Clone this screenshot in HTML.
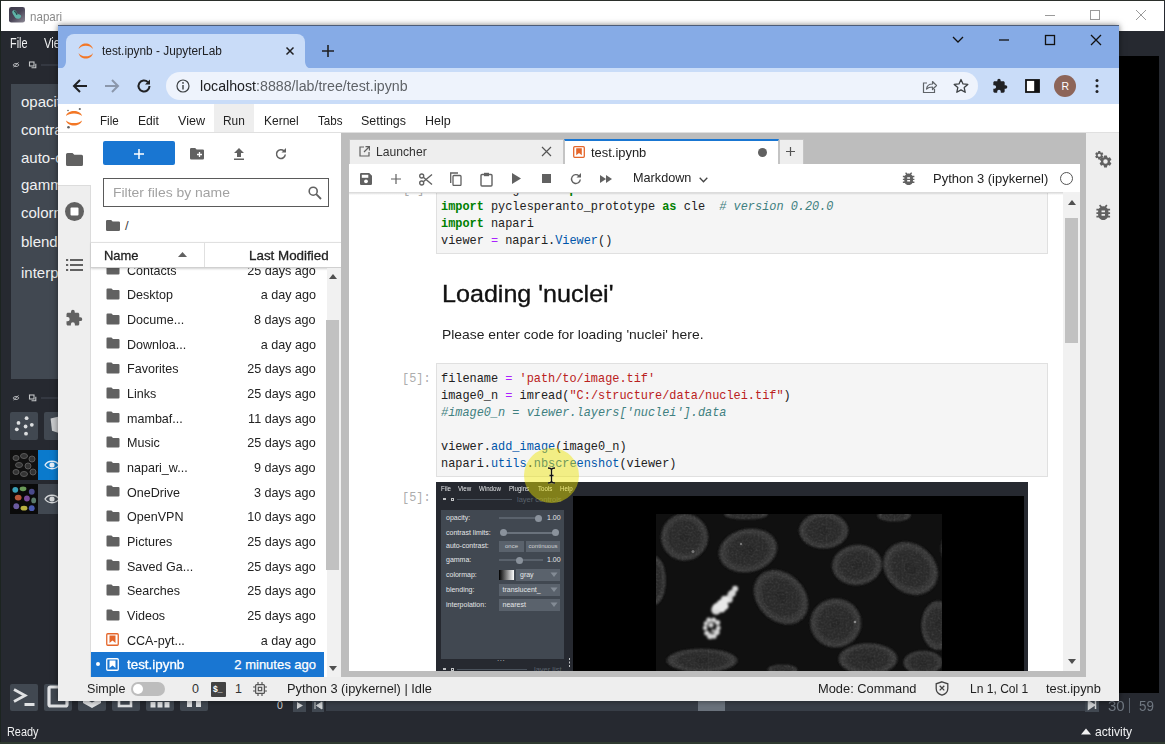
<!DOCTYPE html>
<html><head><meta charset="utf-8"><title>napari</title>
<style>
*{box-sizing:border-box;margin:0;padding:0}
html,body{width:1165px;height:744px;overflow:hidden;background:#262930}
body{font-family:"Liberation Sans",sans-serif;position:relative}
.abs{position:absolute}
#root{position:absolute;left:0;top:0;width:1165px;height:744px;overflow:hidden;background:#262930}
.t{position:absolute;white-space:nowrap;line-height:1}
/* napari */
#ntitle{left:1px;top:1px;width:1163px;height:30px;background:#fff}
.nlab{color:#f0f1f2;font-size:15px}
/* chrome */
#chrome{left:58px;top:25px;width:1061px;height:676px;background:#fff;overflow:hidden;box-shadow:0 0 6px rgba(0,0,0,.5)}
#tabstrip{left:0;top:0;width:1062px;height:44px;background:#86abe6}
#tab{left:8px;top:9px;width:239px;height:35px;background:#c9dcf8;border-radius:8px 8px 0 0}
#tbar{left:0;top:43px;width:1062px;height:36px;background:#c9dcf8}
#url{left:108px;top:47px;width:812px;height:28px;border-radius:14px;background:#eef3fc}
/* jupyter */
#jl{left:0;top:79px;width:1062px;height:597px;background:#fff;color:#222}
.menu{font-size:13.3px;color:#222;top:9.5px}
.row{left:33px;width:233px;height:25px;font-size:13px;color:#222}
.row .n{position:absolute;left:36px;top:5.5px;white-space:nowrap;transform-origin:0 50%;transform:scaleX(.965)}
.row .d{position:absolute;right:8px;top:5.5px;white-space:nowrap;transform-origin:100% 50%;transform:scaleX(.97)}
.row svg{position:absolute;left:15px;top:6.3px}
.code{font-family:"Liberation Mono",monospace;font-size:11.9px;white-space:pre;line-height:17px;color:#212121}
.k{color:#008000;font-weight:bold}.s{color:#ba2121}.c{color:#408080;font-style:italic}.o{color:#aa22ff}.p{color:#0055aa}
</style></head><body><div id="root">
<!-- NAPARI BACKGROUND WINDOW -->
<div class="abs" id="ntitle"></div>
<div class="t" style="left:30.4px;top:9.5px;font-size:13px;color:#8a8a8a;transform-origin:0 50%;transform:scaleX(0.891)">napari</div>

<!-- napari icon -->
<svg class="abs" style="left:9px;top:7.300px" width="16" height="15.500" viewBox="0 0 17 17" preserveAspectRatio="none"><defs><linearGradient id="nig" x1="0" y1="0" x2="1" y2="1"><stop offset="0" stop-color="#3d3a4a"/><stop offset=".5" stop-color="#4a4658"/><stop offset="1" stop-color="#8e8a96"/></linearGradient></defs><rect width="17" height="17" rx="2.500" fill="url(#nig)"/><path d="M4 4c2-1.500 4 .5 4.500 2.500.4 1.500 2.500 1 4 2.500 1.200 1.500-.5 4-3 4-2.500 0-3.500-2-4.500-4C4.500 8 2.500 5.500 4 4z" fill="#5fb3a8"/><path d="M5.500 4.500c1.500.5 2.500 2 3 4" stroke="#2a4a4a" stroke-width="1.500" fill="none"/></svg>
<!-- napari window buttons -->
<svg class="abs" style="left:1030px;top:1px" width="134" height="30" viewBox="0 0 134 30"><g stroke="#9a9a9a" stroke-width="1" fill="none"><path d="M15 14.500h10"/><rect x="60.500" y="9.500" width="9" height="9"/><path d="M106 9l10 10M116 9l-10 10"/></g></svg>
<!-- napari menu -->
<div class="t" style="left:10.3px;top:36.0px;font-size:14.500px;color:#f0f1f2;transform-origin:0 50%;transform:scaleX(0.749)">File</div>
<div class="t" style="left:44.3px;top:36px;font-size:14.500px;color:#f0f1f2;transform-origin:0 50%;transform:scaleX(.78)">View</div>
<!-- dock title 1 -->
<svg class="abs" style="left:8px;top:58px" width="50" height="14" viewBox="0 0 50 14"><path d="M5 7c1.200-2 4.800-2 6 0-1.200 2-4.800 2-6 0zM5.500 9l5-4.500" stroke="#b8babd" stroke-width="1" fill="none"/><rect x="21.500" y="4" width="4.500" height="4" fill="none" stroke="#c4c6c8" stroke-width="1.100"/><path d="M23.500 9.800h4.300v-4" stroke="#c4c6c8" stroke-width="1.100" fill="none"/><path d="M33 7h17" stroke="#424952" stroke-width="1"/></svg>
<div class="abs" style="left:11px;top:84px;width:60px;height:295px;background:#414851"></div>
<div class="t nlab" style="left:21px;top:94.3px">opacity:</div>
<div class="t nlab" style="left:21px;top:122.3px">contrast limits:</div>
<div class="t nlab" style="left:21px;top:150.3px">auto-contrast:</div>
<div class="t nlab" style="left:21px;top:177.3px">gamma:</div>
<div class="t nlab" style="left:21px;top:205.3px">colormap:</div>
<div class="t nlab" style="left:21px;top:234.3px">blending:</div>
<div class="t nlab" style="left:21px;top:265.3px">interpolation:</div>
<!-- dock title 2 -->
<svg class="abs" style="left:8px;top:391px" width="50" height="14" viewBox="0 0 50 14"><path d="M5 7c1.200-2 4.800-2 6 0-1.200 2-4.800 2-6 0zM5.500 9l5-4.500" stroke="#b8babd" stroke-width="1" fill="none"/><rect x="21.500" y="4" width="4.500" height="4" fill="none" stroke="#c4c6c8" stroke-width="1.100"/><path d="M23.500 9.800h4.300v-4" stroke="#c4c6c8" stroke-width="1.100" fill="none"/><path d="M33 7h17" stroke="#424952" stroke-width="1"/></svg>
<!-- layer buttons -->
<div class="abs" style="left:10px;top:412px;width:28px;height:28px;background:#414851;border-radius:2px"></div>
<svg class="abs" style="left:10px;top:412px" width="28" height="28" viewBox="0 0 28 28"><g fill="#dcdee0"><circle cx="16.600" cy="6.200" r="1.900"/><circle cx="8.500" cy="10.900" r="1.900"/><circle cx="21.800" cy="12.800" r="1.900"/><circle cx="15.600" cy="14.500" r="1.900"/><circle cx="6.800" cy="17.300" r="1.900"/><circle cx="16" cy="21.700" r="1.900"/></g></svg>
<div class="abs" style="left:44px;top:412px;width:28px;height:28px;background:#414851;border-radius:2px"></div>
<svg class="abs" style="left:44px;top:412px" width="28" height="28" viewBox="0 0 28 28"><path d="M6.600 6.600L14 4.700V20.700L8 18.800z" fill="#c8cacc"/></svg>
<!-- layer 1 -->
<div class="abs" style="left:10px;top:450px;width:28px;height:30px;background:#111"></div>
<svg class="abs" style="left:10px;top:450px" width="28" height="30" viewBox="0 0 28 30"><g fill="#333" stroke="#5a5a5a" stroke-width="1"><ellipse cx="6" cy="8" rx="3" ry="2.500"/><ellipse cx="14" cy="6" rx="3.500" ry="2.500"/><ellipse cx="22" cy="9" rx="3" ry="3"/><ellipse cx="9" cy="15" rx="3.500" ry="2.500"/><ellipse cx="18" cy="16" rx="3" ry="3"/><ellipse cx="6" cy="22" rx="3" ry="2.500"/><ellipse cx="14" cy="24" rx="3.500" ry="2.500"/><ellipse cx="23" cy="22" rx="3" ry="3"/></g></svg>
<div class="abs" style="left:38px;top:450px;width:40px;height:30px;background:#0a7acc"></div>
<svg class="abs" style="left:44px;top:458px" width="16" height="14" viewBox="0 0 16 14"><path d="M1 7c3-5 11-5 14 0-3 5-11 5-14 0z" fill="none" stroke="#e6eef7" stroke-width="1.300"/><circle cx="8" cy="7" r="2.600" fill="#e6eef7"/></svg>
<!-- layer 2 -->
<div class="abs" style="left:10px;top:484px;width:28px;height:30px;background:#0a0a0a"></div>
<svg class="abs" style="left:10px;top:484px" width="28" height="30" viewBox="0 0 28 31"><ellipse cx="5" cy="6" rx="3" ry="3" fill="#3a9fb8"/><ellipse cx="13" cy="5" rx="3.500" ry="2.500" fill="#6a9a58"/><ellipse cx="22" cy="8" rx="3" ry="3" fill="#4a4a8a"/><ellipse cx="8" cy="14" rx="3.500" ry="3" fill="#b8583a"/><ellipse cx="17" cy="15" rx="3" ry="3" fill="#7a4a9a"/><ellipse cx="24" cy="17" rx="2.500" ry="3" fill="#5a7a6a"/><ellipse cx="6" cy="23" rx="3" ry="3" fill="#6a5aa0"/><ellipse cx="14" cy="25" rx="3.500" ry="2.500" fill="#b8b040"/><ellipse cx="22" cy="25" rx="3" ry="3" fill="#4a5ab0"/></svg>
<div class="abs" style="left:38px;top:484px;width:40px;height:30px;background:#414851"></div>
<svg class="abs" style="left:44px;top:492px" width="16" height="14" viewBox="0 0 16 14"><path d="M1 7c3-5 11-5 14 0-3 5-11 5-14 0z" fill="none" stroke="#d6d8da" stroke-width="1.300"/><circle cx="8" cy="7" r="2.600" fill="#d6d8da"/></svg>
<!-- viewer buttons bottom -->
<div class="abs" style="left:10px;top:684px;width:28px;height:27px;background:#414851;border-radius:2px"></div>
<svg class="abs" style="left:10px;top:684px" width="28" height="27" viewBox="0 0 28 27"><path d="M4 5.500l11 6-11 6M14.500 20.500h10" stroke="#e0e2e4" stroke-width="2.800" fill="none"/></svg>
<div class="abs" style="left:44px;top:684px;width:28px;height:27px;background:#414851;border-radius:2px"></div>
<svg class="abs" style="left:44px;top:684px" width="28" height="27" viewBox="0 0 28 27"><rect x="5" y="3" width="18" height="19" rx="1.500" fill="none" stroke="#e0e2e4" stroke-width="3.200"/></svg>
<div class="abs" style="left:78px;top:684px;width:28px;height:27px;background:#414851;border-radius:2px"></div>
<svg class="abs" style="left:78px;top:684px" width="28" height="27" viewBox="0 0 28 27"><path d="M5 14l9 4.500 9-4.500v5l-9 5-9-5z" fill="#e0e2e4"/></svg>
<div class="abs" style="left:112px;top:684px;width:28px;height:27px;background:#414851;border-radius:2px"></div>
<svg class="abs" style="left:112px;top:684px" width="28" height="27" viewBox="0 0 28 27"><rect x="7" y="8" width="12" height="14" fill="none" stroke="#e0e2e4" stroke-width="2.600"/></svg>
<div class="abs" style="left:146px;top:684px;width:28px;height:27px;background:#414851;border-radius:2px"></div>
<svg class="abs" style="left:146px;top:684px" width="28" height="27" viewBox="0 0 28 27"><g fill="#e0e2e4"><rect x="4.500" y="18" width="5" height="5.500"/><rect x="11.500" y="18" width="5" height="5.500"/><rect x="18.500" y="18" width="5" height="5.500"/></g></svg>
<div class="abs" style="left:180px;top:684px;width:28px;height:27px;background:#414851;border-radius:2px"></div>
<svg class="abs" style="left:180px;top:684px" width="28" height="27" viewBox="0 0 28 27"><g fill="#e0e2e4"><rect x="7" y="12" width="5" height="11"/><rect x="16" y="12" width="5" height="11"/></g></svg>
<!-- dims row -->
<div class="t" style="left:277px;top:700px;font-size:10.500px;color:#d0d2d4">0</div>
<svg class="abs" style="left:292px;top:698.500px" width="34" height="13" viewBox="0 0 34 13"><rect x="1" y="0" width="13" height="13" fill="#414851"/><path d="M5 3l6 3.500-6 3.500z" fill="#d0d2d4"/><rect x="20" y="0" width="12" height="13" fill="#414851"/><path d="M30 3l-5.500 3.500 5.500 3.500zM23 3v7" fill="#d0d2d4" stroke="#d0d2d4"/></svg>
<div class="abs" style="left:326px;top:700px;width:770px;height:11px;background:#383e47"></div>
<div class="abs" style="left:698px;top:700px;width:27px;height:11px;background:#6a727c"></div>
<svg class="abs" style="left:1085px;top:698px" width="14" height="14" viewBox="0 0 14 14"><rect width="14" height="14" fill="#414851"/><path d="M3.500 3l6 4-6 4zM10.500 3v8" fill="#d0d2d4" stroke="#d0d2d4" stroke-width="1.500"/></svg>
<div class="t" style="left:1108.3px;top:698px;font-size:15.500px;color:#6f7780;transform-origin:0 50%;transform:scaleX(0.968)">30</div>
<div class="abs" style="left:1129px;top:698px;width:1px;height:15px;background:#5a626c"></div>
<div class="t" style="left:1138.6px;top:698px;font-size:15.500px;color:#6f7780;transform-origin:0 50%;transform:scaleX(0.864)">59</div>
<!-- canvas right -->
<div class="abs" style="left:1119px;top:56px;width:39.500px;height:637px;background:#000"></div>
<!-- status -->
<div class="t" style="left:7.2px;top:726px;font-size:12.500px;color:#f0f1f2;transform-origin:0 50%;transform:scaleX(0.869)">Ready</div>
<svg class="abs" style="left:1081px;top:728px" width="10" height="7" viewBox="0 0 10 7"><path d="M0 6.500L5 .5l5 6z" fill="#f0f1f2"/></svg>
<div class="t" style="left:1094.6px;top:725px;font-size:13px;color:#f0f1f2;transform-origin:0 50%;transform:scaleX(0.934)">activity</div>
<!-- edges -->
<div class="abs" style="left:0;top:0;width:1165px;height:1px;background:#2b2f2b"></div>
<div class="abs" style="left:0;top:0;width:1px;height:744px;background:#1c2420"></div>
<div class="abs" style="left:0;top:742px;width:1165px;height:2px;background:#2f3a30"></div>

<!-- CHROME WINDOW -->
<div class="abs" id="chrome">
<div class="abs" id="tabstrip"></div>
<div class="abs" id="tab"></div>
<div class="abs" id="tbar"></div>
<svg class="abs" style="left:0;top:36px" width="8" height="8" viewBox="0 0 8 8"><path d="M0 8h8V0C8 5 5 8 0 8z" fill="#c9dcf8"/></svg>
<svg class="abs" style="left:247px;top:36px" width="8" height="8" viewBox="0 0 8 8"><path d="M8 8H0V0c0 5 3 8 8 8z" fill="#c9dcf8"/></svg>
<div class="abs" style="left:0;top:0;width:1062px;height:1px;background:#4c5c78"></div>
<div class="abs" id="url"></div>

<!-- tab curve hints -->
<!-- jupyter favicon -->
<svg class="abs" style="left:20.400px;top:17px" width="15.600" height="18" viewBox="0 0 14 14" preserveAspectRatio="none"><path d="M.5 5.500C2 -.3 12 -.3 13.500 5.500 11 2 3 2 .5 5.500z" fill="#f37726"/><path d="M.5 8.500C2 14.300 12 14.300 13.500 8.500 11 12 3 12 .5 8.500z" fill="#f37726"/></svg>
<div class="t" style="left:44.2px;top:20.3px;font-size:12.300px;color:#202124;transform-origin:0 50%;transform:scaleX(0.963)">test.ipynb - JupyterLab</div>
<svg class="abs" style="left:226.200px;top:20px" width="12" height="12" viewBox="0 0 12 12"><path d="M2.500 2.500l7 7M9.500 2.500l-7 7" stroke="#202124" stroke-width="1.500"/></svg>
<svg class="abs" style="left:263px;top:19px" width="14" height="14" viewBox="0 0 14 14"><path d="M7 1v12M1 7h12" stroke="#202124" stroke-width="1.600"/></svg>
<!-- window controls -->
<svg class="abs" style="left:890px;top:4px" width="160" height="22" viewBox="0 0 160 22"><g stroke="#111" stroke-width="1.300" fill="none"><path d="M5 8l5 5 5-5"/><path d="M51 11h10"/><rect x="97.500" y="6.500" width="9" height="9"/><path d="M143 6l10 10M153 6l-10 10"/></g></svg>
<!-- nav -->
<svg class="abs" style="left:14px;top:53px" width="16" height="16" viewBox="0 0 16 16"><path d="M15 8H2.500M8 2L2 8l6 6" stroke="#202124" stroke-width="2" fill="none"/></svg>
<svg class="abs" style="left:46px;top:53px" width="16" height="16" viewBox="0 0 16 16"><path d="M1 8h12.500M8 2l6 6-6 6" stroke="#8b97ab" stroke-width="2" fill="none"/></svg>
<svg class="abs" style="left:78px;top:53px" width="16" height="16" viewBox="0 0 16 16"><path d="M13.500 8a5.500 5.500 0 1 1-1.600-3.900" stroke="#202124" stroke-width="2" fill="none"/><path d="M14 1.500v5h-5z" fill="#202124"/></svg>
<!-- info icon -->
<svg class="abs" style="left:118px;top:54px" width="14" height="14" viewBox="0 0 14 14"><circle cx="7" cy="7" r="6" fill="none" stroke="#3c4043" stroke-width="1.200"/><path d="M7 6v4.500" stroke="#3c4043" stroke-width="1.400"/><circle cx="7" cy="3.900" r=".9" fill="#3c4043"/></svg>
<div class="t" style="left:142.4px;top:54.500px;font-size:13.800px;color:#202124;transform-origin:0 50%;transform:scaleX(1.029)">localhost<span style="color:#5f6368">:8888/lab/tree/test.ipynb</span></div>
<!-- share -->
<svg class="abs" style="left:863px;top:53px" width="17" height="16" viewBox="0 0 17 16"><path d="M6 5H2.500v9.500h11V11" stroke="#5f6368" stroke-width="1.200" fill="none"/><path d="M5.500 11c.5-3.500 3-5 6-5V3.500L15.500 7.500 11.500 11.500V9c-2.500 0-4.500.5-6 2z" stroke="#5f6368" stroke-width="1.200" fill="none" stroke-linejoin="round"/></svg>
<!-- star -->
<svg class="abs" style="left:895px;top:53px" width="16" height="16" viewBox="0 0 16 16"><path d="M8 1.500l2 4.400 4.800.5-3.600 3.200 1 4.700L8 11.900l-4.200 2.400 1-4.700L1.200 6.400 6 5.900z" stroke="#3c4043" stroke-width="1.300" fill="none" stroke-linejoin="round"/></svg>
<!-- puzzle -->
<svg class="abs" style="left:934px;top:53px" width="16" height="16" viewBox="0 0 24 24"><path fill="#202124" d="M20.500 11H19V7c0-1.100-.9-2-2-2h-4V3.500a2.500 2.500 0 0 0-5 0V5H4c-1.100 0-2 .9-2 2v3.800h1.500a2.700 2.700 0 0 1 0 5.400H2V20c0 1.100.9 2 2 2h3.800v-1.500a2.700 2.700 0 0 1 5.400 0V22H17c1.100 0 2-.9 2-2v-4h1.500a2.500 2.500 0 0 0 0-5z"/></svg>
<!-- side panel -->
<svg class="abs" style="left:967px;top:54px" width="15" height="14" viewBox="0 0 15 14"><rect x="1" y="1" width="13" height="12" fill="#fff" stroke="#111" stroke-width="1.800"/><rect x="9.200" y="1" width="4.800" height="12" fill="#111"/></svg>
<!-- avatar -->
<div class="abs" style="left:996px;top:50px;width:22px;height:22px;border-radius:11px;background:#8d6559"></div>
<div class="t" style="left:1003.500px;top:56px;font-size:10.500px;color:#fff">R</div>
<!-- dots -->
<svg class="abs" style="left:1036px;top:53px" width="6" height="16" viewBox="0 0 6 16"><circle cx="3" cy="2.500" r="1.500" fill="#202124"/><circle cx="3" cy="8" r="1.500" fill="#202124"/><circle cx="3" cy="13.500" r="1.500" fill="#202124"/></svg>

<div class="abs" id="jl">

<!-- menu bar -->
<div class="abs" style="left:0;top:28px;width:1062px;height:1px;background:#e0e0e0"></div>
<svg class="abs" style="left:7px;top:3px" width="18" height="22" viewBox="0 0 18 22"><path d="M1 9C2.500 2.300 15.500 2.300 17 9 14 5.600 4 5.600 1 9z" fill="#f37726"/><path d="M1 13.500C2.500 20.200 15.500 20.200 17 13.500 14 16.900 4 16.900 1 13.500z" fill="#f37726"/><circle cx="14.800" cy="2" r="1.100" fill="#616161"/><circle cx="3" cy="3.500" r=".8" fill="#616161"/><circle cx="3.500" cy="20.300" r="1.300" fill="#616161"/></svg>
<div class="abs" style="left:156px;top:0;width:40px;height:28px;background:#eeeeee"></div>
<div class="t menu" style="left:42.4px;transform-origin:0 50%;transform:scaleX(0.877)">File</div>
<div class="t menu" style="left:80.3px;transform-origin:0 50%;transform:scaleX(0.912)">Edit</div>
<div class="t menu" style="left:119.7px;transform-origin:0 50%;transform:scaleX(0.944)">View</div>
<div class="t menu" style="left:165.2px;transform-origin:0 50%;transform:scaleX(0.893)">Run</div>
<div class="t menu" style="left:205.9px;transform-origin:0 50%;transform:scaleX(0.903)">Kernel</div>
<div class="t menu" style="left:259.7px;transform-origin:0 50%;transform:scaleX(0.872)">Tabs</div>
<div class="t menu" style="left:303.0px;transform-origin:0 50%;transform:scaleX(0.937)">Settings</div>
<div class="t menu" style="left:367.3px;transform-origin:0 50%;transform:scaleX(0.939)">Help</div>
<!-- left sidebar -->
<div class="abs" style="left:0;top:29px;width:33px;height:544px;background:#eeeeee;border-right:1px solid #dcdcdc"></div>
<div class="abs" style="left:0;top:29px;width:33px;height:52px;background:#fff"></div>
<div class="abs" style="left:0;top:81px;width:33px;height:1px;background:#dcdcdc"></div>
<svg class="abs" style="left:8px;top:48.500px" width="17" height="13" viewBox="0 0 17 13"><path d="M1.500 0h5l1.800 1.800h7.200A1.500 1.500 0 0 1 17 3.300v8.200A1.500 1.500 0 0 1 15.500 13h-14A1.500 1.500 0 0 1 0 11.500v-10A1.500 1.500 0 0 1 1.500 0z" fill="#616161"/></svg>
<svg class="abs" style="left:6.500px;top:98px" width="19" height="19" viewBox="0 0 19 19"><circle cx="9.500" cy="9.500" r="9.500" fill="#616161"/><rect x="5.500" y="5.500" width="8" height="8" rx="1" fill="#fff"/></svg>
<svg class="abs" style="left:8px;top:154px" width="17" height="14" viewBox="0 0 17 14"><g fill="#616161"><rect x="0" y="1" width="2.200" height="2"/><rect x="4" y="1" width="13" height="2"/><rect x="0" y="6" width="2.200" height="2"/><rect x="4" y="6" width="13" height="2"/><rect x="0" y="11" width="2.200" height="2"/><rect x="4" y="11" width="13" height="2"/></g></svg>
<svg class="abs" style="left:7px;top:205px" width="18" height="18" viewBox="0 0 24 24"><path fill="#616161" d="M20.500 11H19V7c0-1.100-.9-2-2-2h-4V3.500a2.500 2.500 0 0 0-5 0V5H4c-1.100 0-2 .9-2 2v3.800h1.500a2.700 2.700 0 0 1 0 5.400H2V20c0 1.100.9 2 2 2h3.800v-1.500a2.700 2.700 0 0 1 5.400 0V22H17c1.100 0 2-.9 2-2v-4h1.500a2.500 2.500 0 0 0 0-5z"/></svg>
<!-- file browser -->
<div class="abs" style="left:45px;top:37px;width:72px;height:24px;background:#1976d2;border-radius:2px"></div>
<svg class="abs" style="left:76px;top:45px" width="10" height="10" viewBox="0 0 10 10"><path d="M5 0v10M0 5h10" stroke="#fff" stroke-width="1.500"/></svg>
<svg class="abs" style="left:132px;top:44px" width="14" height="11.500" viewBox="0 0 14 11.500"><path d="M1.200 0h4l1.400 1.400h6.200A1.200 1.200 0 0 1 14 2.600v7.700a1.200 1.200 0 0 1-1.200 1.200H1.200A1.200 1.200 0 0 1 0 10.300V1.200A1.200 1.200 0 0 1 1.200 0z" fill="#616161"/><path d="M9.500 4v5M7 6.500h5" stroke="#fff" stroke-width="1.300"/></svg>
<svg class="abs" style="left:176px;top:44px" width="10" height="12" viewBox="0 0 10 12"><path d="M5 0l5 5H7v4H3V5H0zM0 10.500h10V12H0z" fill="#616161"/></svg>
<svg class="abs" style="left:216.500px;top:44px" width="12" height="12" viewBox="0 0 12 12"><path d="M10.300 6.500A4.400 4.400 0 1 1 9 2.900" stroke="#616161" stroke-width="1.500" fill="none"/><path d="M11 0v4.500H6.500z" fill="#616161"/></svg>
<div class="abs" style="left:45px;top:73.800px;width:226px;height:29.700px;border:1px solid #5a5a5a;background:#fff"></div>
<div class="t" style="left:55.0px;top:82px;font-size:13.300px;color:#a2a2a2;transform-origin:0 50%;transform:scaleX(1.048)">Filter files by name</div>
<svg class="abs" style="left:250px;top:82px" width="14" height="14" viewBox="0 0 14 14"><circle cx="5.200" cy="5.200" r="4" fill="none" stroke="#616161" stroke-width="1.600"/><path d="M8.200 8.200l4.800 4.800" stroke="#616161" stroke-width="1.800"/></svg>
<svg class="abs" style="left:48px;top:115.500px" width="14" height="11" viewBox="0 0 14 11"><path d="M1.200 0h4l1.400 1.400h6.200A1.200 1.200 0 0 1 14 2.600v7.200a1.200 1.200 0 0 1-1.200 1.200H1.200A1.200 1.200 0 0 1 0 9.800V1.200A1.200 1.200 0 0 1 1.200 0z" fill="#616161"/></svg>
<div class="t" style="left:67px;top:115px;font-size:13px;color:#424242">/</div>
<!-- listing -->
<div class="abs" id="listing" style="left:0;top:163px;width:283px;height:410px;overflow:hidden">
<div class="abs" style="left:0;top:-163px;width:283px;height:600px">
<div class="abs row" style="top:153.2px;"><svg width="14" height="12" viewBox="0 0 14 12"><path d="M1.500 0.500h4l1.500 1.500h5.500a1 1 0 0 1 1 1v7.500a1 1 0 0 1-1 1h-11a1 1 0 0 1-1-1v-9a1 1 0 0 1 1-1z" fill="#616161"/></svg><span class="n">Contacts</span><span class="d">25 days ago</span></div>
<div class="abs row" style="top:177.9px;"><svg width="14" height="12" viewBox="0 0 14 12"><path d="M1.500 0.500h4l1.500 1.500h5.500a1 1 0 0 1 1 1v7.500a1 1 0 0 1-1 1h-11a1 1 0 0 1-1-1v-9a1 1 0 0 1 1-1z" fill="#616161"/></svg><span class="n">Desktop</span><span class="d">a day ago</span></div>
<div class="abs row" style="top:202.5px;"><svg width="14" height="12" viewBox="0 0 14 12"><path d="M1.500 0.500h4l1.500 1.500h5.500a1 1 0 0 1 1 1v7.500a1 1 0 0 1-1 1h-11a1 1 0 0 1-1-1v-9a1 1 0 0 1 1-1z" fill="#616161"/></svg><span class="n">Docume...</span><span class="d">8 days ago</span></div>
<div class="abs row" style="top:227.2px;"><svg width="14" height="12" viewBox="0 0 14 12"><path d="M1.500 0.500h4l1.500 1.500h5.500a1 1 0 0 1 1 1v7.500a1 1 0 0 1-1 1h-11a1 1 0 0 1-1-1v-9a1 1 0 0 1 1-1z" fill="#616161"/></svg><span class="n">Downloa...</span><span class="d">a day ago</span></div>
<div class="abs row" style="top:251.9px;"><svg width="14" height="12" viewBox="0 0 14 12"><path d="M1.500 0.500h4l1.500 1.500h5.500a1 1 0 0 1 1 1v7.500a1 1 0 0 1-1 1h-11a1 1 0 0 1-1-1v-9a1 1 0 0 1 1-1z" fill="#616161"/></svg><span class="n">Favorites</span><span class="d">25 days ago</span></div>
<div class="abs row" style="top:276.6px;"><svg width="14" height="12" viewBox="0 0 14 12"><path d="M1.500 0.500h4l1.500 1.500h5.500a1 1 0 0 1 1 1v7.500a1 1 0 0 1-1 1h-11a1 1 0 0 1-1-1v-9a1 1 0 0 1 1-1z" fill="#616161"/></svg><span class="n">Links</span><span class="d">25 days ago</span></div>
<div class="abs row" style="top:301.2px;"><svg width="14" height="12" viewBox="0 0 14 12"><path d="M1.500 0.500h4l1.500 1.500h5.500a1 1 0 0 1 1 1v7.500a1 1 0 0 1-1 1h-11a1 1 0 0 1-1-1v-9a1 1 0 0 1 1-1z" fill="#616161"/></svg><span class="n">mambaf...</span><span class="d">11 days ago</span></div>
<div class="abs row" style="top:325.9px;"><svg width="14" height="12" viewBox="0 0 14 12"><path d="M1.500 0.500h4l1.500 1.500h5.500a1 1 0 0 1 1 1v7.500a1 1 0 0 1-1 1h-11a1 1 0 0 1-1-1v-9a1 1 0 0 1 1-1z" fill="#616161"/></svg><span class="n">Music</span><span class="d">25 days ago</span></div>
<div class="abs row" style="top:350.6px;"><svg width="14" height="12" viewBox="0 0 14 12"><path d="M1.500 0.500h4l1.500 1.500h5.500a1 1 0 0 1 1 1v7.500a1 1 0 0 1-1 1h-11a1 1 0 0 1-1-1v-9a1 1 0 0 1 1-1z" fill="#616161"/></svg><span class="n">napari_w...</span><span class="d">9 days ago</span></div>
<div class="abs row" style="top:375.2px;"><svg width="14" height="12" viewBox="0 0 14 12"><path d="M1.500 0.500h4l1.500 1.500h5.500a1 1 0 0 1 1 1v7.500a1 1 0 0 1-1 1h-11a1 1 0 0 1-1-1v-9a1 1 0 0 1 1-1z" fill="#616161"/></svg><span class="n">OneDrive</span><span class="d">3 days ago</span></div>
<div class="abs row" style="top:399.9px;"><svg width="14" height="12" viewBox="0 0 14 12"><path d="M1.500 0.500h4l1.500 1.500h5.500a1 1 0 0 1 1 1v7.500a1 1 0 0 1-1 1h-11a1 1 0 0 1-1-1v-9a1 1 0 0 1 1-1z" fill="#616161"/></svg><span class="n">OpenVPN</span><span class="d">10 days ago</span></div>
<div class="abs row" style="top:424.6px;"><svg width="14" height="12" viewBox="0 0 14 12"><path d="M1.500 0.500h4l1.500 1.500h5.500a1 1 0 0 1 1 1v7.500a1 1 0 0 1-1 1h-11a1 1 0 0 1-1-1v-9a1 1 0 0 1 1-1z" fill="#616161"/></svg><span class="n">Pictures</span><span class="d">25 days ago</span></div>
<div class="abs row" style="top:449.2px;"><svg width="14" height="12" viewBox="0 0 14 12"><path d="M1.500 0.500h4l1.500 1.500h5.500a1 1 0 0 1 1 1v7.500a1 1 0 0 1-1 1h-11a1 1 0 0 1-1-1v-9a1 1 0 0 1 1-1z" fill="#616161"/></svg><span class="n">Saved Ga...</span><span class="d">25 days ago</span></div>
<div class="abs row" style="top:473.9px;"><svg width="14" height="12" viewBox="0 0 14 12"><path d="M1.500 0.500h4l1.500 1.500h5.500a1 1 0 0 1 1 1v7.500a1 1 0 0 1-1 1h-11a1 1 0 0 1-1-1v-9a1 1 0 0 1 1-1z" fill="#616161"/></svg><span class="n">Searches</span><span class="d">25 days ago</span></div>
<div class="abs row" style="top:498.6px;"><svg width="14" height="12" viewBox="0 0 14 12"><path d="M1.500 0.500h4l1.500 1.500h5.500a1 1 0 0 1 1 1v7.500a1 1 0 0 1-1 1h-11a1 1 0 0 1-1-1v-9a1 1 0 0 1 1-1z" fill="#616161"/></svg><span class="n">Videos</span><span class="d">25 days ago</span></div>
<div class="abs row" style="top:523.2px;"><svg width="13" height="13" viewBox="0 0 13 13"><rect x=".75" y=".75" width="11.500" height="11.500" rx="1" fill="#fff" stroke="#e4662b" stroke-width="1.300"/><path d="M3.500 2.500h6v7.500l-3-2.500-3 2.500z" fill="#e4662b"/></svg><span class="n">CCA-pyt...</span><span class="d">a day ago</span></div>
<div class="abs row" style="top:547.9px;background:#1976d2;color:#fff;"><div class="abs" style="left:5px;top:10.500px;width:4px;height:4px;border-radius:2px;background:#fff"></div><svg width="13" height="13" viewBox="0 0 13 13"><rect x=".75" y=".75" width="11.500" height="11.500" rx="1" fill="#1976d2" stroke="#fff" stroke-width="1.300"/><path d="M3.500 2.500h6v7.500l-3-2.500-3 2.500z" fill="#fff"/></svg><span class="n" style="transform:scaleX(1.03);-webkit-text-stroke:.3px #fff">test.ipynb</span><span class="d" style="transform:scaleX(1);-webkit-text-stroke:.25px #fff">2 minutes ago</span></div>

</div></div>
<!-- header -->
<div class="abs" style="left:33px;top:138px;width:250px;height:26px;background:#fff;border-top:1px solid #e0e0e0;border-bottom:1px solid #d0d0d0;box-shadow:0 1px 2px rgba(0,0,0,.18)"></div>
<div class="t" style="left:45.5px;top:144.500px;font-size:13.200px;color:#222;-webkit-text-stroke:.3px #222;transform-origin:0 50%;transform:scaleX(0.980)">Name</div>
<svg class="abs" style="left:119.500px;top:148px" width="9" height="5" viewBox="0 0 9 5"><path d="M0 5L4.500 0 9 5z" fill="#616161"/></svg>
<div class="abs" style="left:146px;top:139px;width:1px;height:24px;background:#e0e0e0"></div>
<div class="t" style="left:191.0px;top:144.500px;font-size:13.200px;color:#222;-webkit-text-stroke:.3px #222;transform-origin:0 50%;transform:scaleX(1.015)">Last Modified</div>
<!-- listing scrollbar -->
<div class="abs" style="left:269px;top:164px;width:14px;height:409px;background:#f1f1f1"></div>
<div class="abs" style="left:268px;top:216px;width:13px;height:250px;background:#c1c1c1"></div>
<svg class="abs" style="left:270.500px;top:170px" width="8" height="5" viewBox="0 0 8 5"><path d="M0 5L4 0l4 5z" fill="#505050"/></svg>
<svg class="abs" style="left:270.500px;top:562px" width="8" height="5" viewBox="0 0 8 5"><path d="M0 0l4 5 4-5z" fill="#505050"/></svg>
<!-- dock bg -->
<div class="abs" style="left:283px;top:29px;width:745px;height:544px;background:#bdbdbd"></div>

<!-- tab bar -->
<div class="abs" style="left:291px;top:35px;width:215px;height:25px;background:#eeeeee;border:1px solid #c4c4c4;border-bottom:none"></div>
<svg class="abs" style="left:300.5px;top:42px" width="11" height="11" viewBox="0 0 11 11"><path d="M5 1H1v9h9V6" stroke="#616161" stroke-width="1.200" fill="none"/><path d="M6.500.6h4v4M10.300.8L5 6" stroke="#616161" stroke-width="1.200" fill="none"/></svg>
<div class="t" style="left:317.9px;top:41px;font-size:13px;color:#333;transform-origin:0 50%;transform:scaleX(0.935)">Launcher</div>
<svg class="abs" style="left:483px;top:42px" width="11" height="11" viewBox="0 0 11 11"><path d="M1 1l9 9M10 1l-9 9" stroke="#555" stroke-width="1.200"/></svg>
<div class="abs" style="left:505.5px;top:35px;width:215px;height:26px;background:#fff;border-top:2px solid #1976d2;border-left:1px solid #c4c4c4;border-right:1px solid #c4c4c4"></div>
<svg class="abs" style="left:515px;top:41.5px" width="12" height="12" viewBox="0 0 12 12"><rect x=".7" y=".7" width="10.600" height="10.600" rx="1" fill="#fff" stroke="#e4662b" stroke-width="1.300"/><path d="M3.200 2.300h5.600v7l-2.800-2.300-2.800 2.300z" fill="#e4662b"/></svg>
<div class="t" style="left:532.5px;top:41.5px;font-size:13px;color:#222;transform-origin:0 50%;transform:scaleX(0.994)">test.ipynb</div>
<div class="abs" style="left:699.5px;top:43.5px;width:9px;height:9px;border-radius:5px;background:#616161"></div>
<div class="abs" style="left:720.5px;top:35px;width:25px;height:25px;background:#eeeeee;border:1px solid #c4c4c4;border-bottom:none"></div>
<svg class="abs" style="left:728px;top:43px" width="9" height="9" viewBox="0 0 9 9"><path d="M4.500 0v9M0 4.500h9" stroke="#555" stroke-width="1.200"/></svg>
<div class="abs" style="left:291px;top:59.500px;width:215px;height:1px;background:#c4c4c4"></div>
<!-- notebook panel -->
<div class="abs" style="left:291px;top:60px;width:731px;height:507px;background:#fff"></div>
<!-- notebook content (clipped) -->
<div class="abs" style="left:291px;top:88px;width:714px;height:479px;overflow:hidden">
 <div class="abs" style="left:-349px;top:-192px;width:1165px;height:744px">
  <div class="abs" style="left:436px;top:150px;width:612px;height:104px;background:#f5f5f5;border:1px solid #e0e0e0"></div>
  <div class="abs code" style="left:441px;top:181.6px;color:#adadad;left:403px">[ ]:</div>
  <div class="abs code" style="left:441px;top:181.6px"><span class="k">from</span> skimage.io <span class="k">import</span> imread
<span class="k">import</span> pyclesperanto_prototype <span class="k">as</span> cle  <span class="c"># version 0.20.0</span>
<span class="k">import</span> napari
viewer <span class="o">=</span> napari.<span class="p">Viewer</span>()</div>
  <div class="t" style="left:442.0px;top:281.900px;font-size:24.300px;color:#111;-webkit-text-stroke:.35px #111;transform-origin:0 50%;transform:scaleX(1.033)">Loading 'nuclei'</div>
  <div class="t" style="left:442.0px;top:327.800px;font-size:13.300px;color:#222;transform-origin:0 50%;transform:scaleX(1.044)">Please enter code for loading 'nuclei' here.</div>
  <div class="abs" style="left:436px;top:363px;width:612px;height:114px;background:#f5f5f5;border:1px solid #e0e0e0"></div>
  <div class="abs code" style="left:402px;top:370.6px;color:#adadad">[5]:</div>
  <div class="abs code" style="left:441px;top:370.6px">filename <span class="o">=</span> <span class="s">'path/to/image.tif'</span>
image0_n <span class="o">=</span> imread(<span class="s">"C:/structure/data/nuclei.tif"</span>)
<span class="c">#image0_n = viewer.layers['nuclei'].data</span>

viewer.<span class="p">add_image</span>(image0_n)
napari.<span class="p">utils</span>.<span class="p">nbscreenshot</span>(viewer)</div>
  <div class="abs code" style="left:402px;top:489.6px;color:#adadad">[5]:</div>
  
<div class="abs" style="left:436px;top:481.500px;width:592px;height:200px;background:#262930"></div>
<div class="t" style="left:440.8px;top:484.5px;font-size:7px;color:#e4e6e8;transform-origin:0 50%;transform:scaleX(.88)">File</div><div class="t" style="left:457.7px;top:484.5px;font-size:7px;color:#e4e6e8;transform-origin:0 50%;transform:scaleX(.88)">View</div><div class="t" style="left:479px;top:484.5px;font-size:7px;color:#e4e6e8;transform-origin:0 50%;transform:scaleX(.88)">Window</div><div class="t" style="left:509px;top:484.5px;font-size:7px;color:#e4e6e8;transform-origin:0 50%;transform:scaleX(.88)">Plugins</div><div class="t" style="left:538px;top:484.5px;font-size:7px;color:#e4e6e8;transform-origin:0 50%;transform:scaleX(.88)">Tools</div><div class="t" style="left:560px;top:484.5px;font-size:7px;color:#e4e6e8;transform-origin:0 50%;transform:scaleX(.88)">Help</div>
<div class="abs" style="left:443px;top:498px;width:3px;height:2px;background:#c0c2c4"></div><div class="abs" style="left:451px;top:497.500px;width:3px;height:3px;border:1px solid #c0c2c4"></div>
<div class="abs" style="left:457px;top:499px;width:55px;height:1px;background:#4a525c"></div>
<div class="t" style="left:517px;top:495.8px;font-size:7.5px;color:#59616b">layer controls</div>
<div class="abs" style="left:440.500px;top:509.500px;width:123.500px;height:149.500px;background:#414851"></div>
<div class="t" style="left:446px;top:514.0px;font-size:7px;color:#e4e6e8">opacity:</div><div class="t" style="left:446px;top:528.5px;font-size:7px;color:#e4e6e8">contrast limits:</div><div class="t" style="left:446px;top:542.0px;font-size:7px;color:#e4e6e8">auto-contrast:</div><div class="t" style="left:446px;top:556.0px;font-size:7px;color:#e4e6e8">gamma:</div><div class="t" style="left:446px;top:571.0px;font-size:7px;color:#e4e6e8">colormap:</div><div class="t" style="left:446px;top:586.0px;font-size:7px;color:#e4e6e8">blending:</div><div class="t" style="left:446px;top:601.0px;font-size:7px;color:#e4e6e8">interpolation:</div>
<div class="abs" style="left:499px;top:517px;width:40px;height:2px;background:#5a626c"></div><div class="abs" style="left:534.500px;top:514.500px;width:7px;height:7px;border-radius:4px;background:#8a929c"></div><div class="t" style="left:547px;top:514.0px;font-size:7px;color:#e4e6e8">1.00</div>
<div class="abs" style="left:503px;top:531.500px;width:53px;height:2px;background:#6a727c"></div><div class="abs" style="left:499.500px;top:529px;width:7px;height:7px;border-radius:4px;background:#8a929c"></div><div class="abs" style="left:552px;top:529px;width:7px;height:7px;border-radius:4px;background:#8a929c"></div>
<div class="abs" style="left:499px;top:540.500px;width:25px;height:11px;background:#5a626c"></div><div class="abs" style="left:526px;top:540.500px;width:34px;height:11px;background:#5a626c"></div><div class="t" style="left:505px;top:542.5px;font-size:6px;color:#d0d2d4">once</div><div class="t" style="left:528.5px;top:542.5px;font-size:6px;color:#d0d2d4">continuous</div>
<div class="abs" style="left:499px;top:559px;width:44px;height:2px;background:#5a626c"></div><div class="abs" style="left:515.500px;top:556.500px;width:7px;height:7px;border-radius:4px;background:#8a929c"></div><div class="t" style="left:547px;top:556.0px;font-size:7px;color:#e4e6e8">1.00</div>
<div class="abs" style="left:499px;top:570px;width:15px;height:10px;background:linear-gradient(90deg,#000,#fff)"></div>
<div class="abs" style="left:516px;top:569px;width:44px;height:12px;background:#5a626c"></div><div class="t" style="left:520px;top:571.0px;font-size:7px;color:#e4e6e8">gray</div>
<div class="abs" style="left:499px;top:584px;width:61px;height:12px;background:#5a626c"></div><div class="t" style="left:502.5px;top:586.0px;font-size:7px;color:#e4e6e8">translucent_</div>
<div class="abs" style="left:499px;top:599px;width:61px;height:12px;background:#5a626c"></div><div class="t" style="left:502.5px;top:601.0px;font-size:7px;color:#e4e6e8">nearest</div>
<svg class="abs" style="left:550px;top:571px" width="8" height="40" viewBox="0 0 8 40"><path d="M.5 1.500h7L4 6zM.5 16.500h7L4 21zM.5 31.500h7L4 36z" fill="#838b95"/></svg>
<div class="t" style="left:497px;top:655px;font-size:8px;color:#c0c2c4;letter-spacing:.5px">...</div>
<div class="abs" style="left:568.500px;top:658px;width:1.500px;height:1.500px;background:#c0c2c4;box-shadow:0 3.500px 0 #c0c2c4,0 7px 0 #c0c2c4"></div>
<div class="abs" style="left:443px;top:668px;width:3px;height:2px;background:#c0c2c4"></div><div class="abs" style="left:451px;top:667.500px;width:3px;height:3px;border:1px solid #c0c2c4"></div>
<div class="abs" style="left:457px;top:669px;width:70px;height:1px;background:#4a525c"></div>
<div class="t" style="left:534px;top:665.8px;font-size:7.5px;color:#59616b">layer list</div>
<div class="abs" style="left:572.500px;top:495.500px;width:451.500px;height:190px;background:#000"></div>
<svg class="abs" style="left:656px;top:513.500px" width="286" height="170" viewBox="0 0 286 170">
<defs><radialGradient id="ng"><stop offset="0" stop-color="#272727"/><stop offset=".65" stop-color="#2c2c2c"/><stop offset=".9" stop-color="#3d3d3d"/><stop offset="1" stop-color="#181818"/></radialGradient>
<filter id="nz" x="0" y="0" width="100%" height="100%"><feTurbulence type="fractalNoise" baseFrequency=".5" numOctaves="2" seed="3" result="n"/><feColorMatrix in="n" type="matrix" values="0 0 0 0 1  0 0 0 0 1  0 0 0 0 1  .9 .9 0 0 -.75" result="m"/><feComposite in="m" in2="SourceGraphic" operator="in"/></filter>
<filter id="bl"><feGaussianBlur stdDeviation="1"/></filter></defs>
<rect width="286" height="170" fill="#101010"/>
<g filter="url(#bl)"><ellipse cx="28.6" cy="23.1" rx="24" ry="24" transform="rotate(0 28.6 23.1)" fill="url(#ng)"/><ellipse cx="92.0" cy="36.5" rx="30" ry="22" transform="rotate(-12 92.0 36.5)" fill="url(#ng)"/><ellipse cx="167.7" cy="16.5" rx="25" ry="18.5" transform="rotate(0 167.7 16.5)" fill="url(#ng)"/><ellipse cx="201.0" cy="51.0" rx="25.5" ry="20.5" transform="rotate(-5 201.0 51.0)" fill="url(#ng)"/><ellipse cx="254.5" cy="54.5" rx="30" ry="24.5" transform="rotate(40 254.5 54.5)" fill="url(#ng)"/><ellipse cx="125.0" cy="83.2" rx="31" ry="24" transform="rotate(45 125.0 83.2)" fill="url(#ng)"/><ellipse cx="179.7" cy="109.0" rx="26" ry="25" transform="rotate(0 179.7 109.0)" fill="url(#ng)"/><ellipse cx="212.0" cy="145.0" rx="30" ry="16" transform="rotate(0 212.0 145.0)" fill="url(#ng)"/><ellipse cx="267.0" cy="148.5" rx="20" ry="12" transform="rotate(0 267.0 148.5)" fill="url(#ng)"/><ellipse cx="46.0" cy="146.5" rx="36" ry="12" transform="rotate(0 46.0 146.5)" fill="url(#ng)"/><ellipse cx="282.0" cy="111.5" rx="17" ry="25" transform="rotate(0 282.0 111.5)" fill="url(#ng)"/><ellipse cx="-2.0" cy="66.5" rx="12" ry="25" transform="rotate(0 -2.0 66.5)" fill="url(#ng)"/><ellipse cx="90.0" cy="0.5" rx="22" ry="5" transform="rotate(0 90.0 0.5)" fill="url(#ng)"/><ellipse cx="238.0" cy="1.5" rx="17" ry="6" transform="rotate(0 238.0 1.5)" fill="url(#ng)"/><ellipse cx="126.5" cy="155.5" rx="15" ry="5" transform="rotate(0 126.5 155.5)" fill="url(#ng)"/><ellipse cx="288.0" cy="34.5" rx="3" ry="10" transform="rotate(0 288.0 34.5)" fill="url(#ng)"/></g>
<g filter="url(#nz)" opacity=".13"><ellipse cx="28.6" cy="23.1" rx="24" ry="24" transform="rotate(0 28.6 23.1)" fill="url(#ng)"/><ellipse cx="92.0" cy="36.5" rx="30" ry="22" transform="rotate(-12 92.0 36.5)" fill="url(#ng)"/><ellipse cx="167.7" cy="16.5" rx="25" ry="18.5" transform="rotate(0 167.7 16.5)" fill="url(#ng)"/><ellipse cx="201.0" cy="51.0" rx="25.5" ry="20.5" transform="rotate(-5 201.0 51.0)" fill="url(#ng)"/><ellipse cx="254.5" cy="54.5" rx="30" ry="24.5" transform="rotate(40 254.5 54.5)" fill="url(#ng)"/><ellipse cx="125.0" cy="83.2" rx="31" ry="24" transform="rotate(45 125.0 83.2)" fill="url(#ng)"/><ellipse cx="179.7" cy="109.0" rx="26" ry="25" transform="rotate(0 179.7 109.0)" fill="url(#ng)"/><ellipse cx="212.0" cy="145.0" rx="30" ry="16" transform="rotate(0 212.0 145.0)" fill="url(#ng)"/><ellipse cx="267.0" cy="148.5" rx="20" ry="12" transform="rotate(0 267.0 148.5)" fill="url(#ng)"/><ellipse cx="46.0" cy="146.5" rx="36" ry="12" transform="rotate(0 46.0 146.5)" fill="url(#ng)"/><ellipse cx="282.0" cy="111.5" rx="17" ry="25" transform="rotate(0 282.0 111.5)" fill="url(#ng)"/><ellipse cx="-2.0" cy="66.5" rx="12" ry="25" transform="rotate(0 -2.0 66.5)" fill="url(#ng)"/><ellipse cx="90.0" cy="0.5" rx="22" ry="5" transform="rotate(0 90.0 0.5)" fill="url(#ng)"/><ellipse cx="238.0" cy="1.5" rx="17" ry="6" transform="rotate(0 238.0 1.5)" fill="url(#ng)"/><ellipse cx="126.5" cy="155.5" rx="15" ry="5" transform="rotate(0 126.5 155.5)" fill="url(#ng)"/><ellipse cx="288.0" cy="34.5" rx="3" ry="10" transform="rotate(0 288.0 34.5)" fill="url(#ng)"/></g>
<filter id="bl3"><feGaussianBlur stdDeviation=".8"/></filter><g filter="url(#bl3)"><circle cx="60.2" cy="95.8" r="4.9" fill="#d8d8d8"/><circle cx="62.1" cy="93.1" r="4.6" fill="#d8d8d8"/><circle cx="66.5" cy="92.7" r="4.7" fill="#d8d8d8"/><circle cx="66.5" cy="89.2" r="3.9" fill="#d8d8d8"/><circle cx="68.5" cy="85.3" r="3.6" fill="#d8d8d8"/><circle cx="72.9" cy="84.9" r="3.9" fill="#d8d8d8"/><circle cx="74.7" cy="80.3" r="3.1" fill="#d8d8d8"/><circle cx="76.3" cy="79.3" r="3.5" fill="#d8d8d8"/><circle cx="79.1" cy="74.8" r="3.0" fill="#d8d8d8"/><circle cx="65" cy="90" r="4.3" fill="#e8e8e8"/><circle cx="69" cy="92" r="3.5" fill="#e8e8e8"/><circle cx="60" cy="93" r="3.2" fill="#e8e8e8"/><circle cx="70" cy="86" r="3.2" fill="#e8e8e8"/><circle cx="66" cy="95.5" r="3.0" fill="#e8e8e8"/><circle cx="62.3" cy="114.0" r="2.4" fill="#d4d4d4"/><circle cx="60.7" cy="118.3" r="3.0" fill="#d4d4d4"/><circle cx="58.1" cy="122.2" r="2.5" fill="#d4d4d4"/><circle cx="54.1" cy="122.2" r="3.0" fill="#d4d4d4"/><circle cx="50.8" cy="119.0" r="2.6" fill="#d4d4d4"/><circle cx="49.2" cy="113.9" r="2.3" fill="#d4d4d4"/><circle cx="49.9" cy="109.5" r="2.2" fill="#d4d4d4"/><circle cx="52.8" cy="106.1" r="2.5" fill="#d4d4d4"/><circle cx="57.6" cy="105.9" r="2.5" fill="#d4d4d4"/><circle cx="61.6" cy="108.5" r="2.6" fill="#d4d4d4"/><circle cx="55" cy="111" r="2.600" fill="#cfcfcf"/><circle cx="57" cy="117" r="2" fill="#9a9a9a"/></g>
<circle cx="37" cy="37.500" r="1.500" fill="#777"/><circle cx="199" cy="108" r="1.300" fill="#888"/><circle cx="85" cy="30" r="1.200" fill="#777"/>
</svg>

 </div>
</div>
<!-- nb toolbar -->
<div class="abs" style="left:291px;top:87.5px;width:731px;height:1px;background:#dcdcdc"></div>
<div class="abs" style="left:291px;top:88.5px;width:731px;height:2px;background:linear-gradient(rgba(0,0,0,.12),rgba(0,0,0,0))"></div>
<svg class="abs" style="left:302px;top:69px" width="12" height="12" viewBox="0 0 12 12"><path d="M1.200 0h8L12 2.800v8A1.200 1.200 0 0 1 10.800 12H1.200A1.200 1.200 0 0 1 0 10.800V1.200A1.200 1.200 0 0 1 1.200 0z" fill="#616161"/><rect x="1.800" y="1.800" width="6.500" height="3" fill="#fff"/><circle cx="6" cy="8.300" r="1.900" fill="#fff"/></svg>
<svg class="abs" style="left:333px;top:70px" width="10" height="10" viewBox="0 0 10 10"><path d="M5 0v10M0 5h10" stroke="#616161" stroke-width="1.200"/></svg>
<svg class="abs" style="left:361px;top:68.5px" width="14" height="13" viewBox="0 0 14 13"><g stroke="#616161" stroke-width="1.400" fill="none"><circle cx="2.700" cy="3" r="2"/><circle cx="2.700" cy="10" r="2"/><path d="M4.300 4.200L13 11.500M4.300 8.800L13 1.500"/></g></svg>
<svg class="abs" style="left:391px;top:68px" width="13" height="14" viewBox="0 0 13 14"><g stroke="#616161" stroke-width="1.300" fill="none"><path d="M9 1H1.700v10"/><rect x="4" y="3.500" width="8" height="10" rx="1"/></g></svg>
<svg class="abs" style="left:421.5px;top:67.5px" width="13" height="15" viewBox="0 0 13 15"><rect x="1" y="2.500" width="11" height="11.500" rx="1" stroke="#616161" stroke-width="1.400" fill="none"/><rect x="4" y=".8" width="5" height="3.400" fill="#616161"/></svg>
<svg class="abs" style="left:454px;top:69px" width="9" height="11" viewBox="0 0 9 11"><path d="M0 0l9 5.500-9 5.500z" fill="#616161"/></svg>
<div class="abs" style="left:483.5px;top:70px;width:9px;height:9px;background:#616161"></div>
<svg class="abs" style="left:512px;top:68.5px" width="12" height="12" viewBox="0 0 12 12"><path d="M10.300 6.500A4.400 4.400 0 1 1 9 2.900" stroke="#616161" stroke-width="1.400" fill="none"/><path d="M11 0v4.500H6.500z" fill="#616161"/></svg>
<svg class="abs" style="left:542px;top:70.5px" width="12" height="8" viewBox="0 0 12 8"><path d="M0 0l6 4-6 4zM6 0l6 4-6 4z" fill="#616161"/></svg>
<div class="t" style="left:574.6px;top:67px;font-size:13px;color:#222;transform-origin:0 50%;transform:scaleX(0.974)">Markdown</div>
<svg class="abs" style="left:640.5px;top:72.5px" width="9" height="6" viewBox="0 0 9 6"><path d="M.7.700l3.800 4 3.800-4" stroke="#444" stroke-width="1.300" fill="none"/></svg>
<svg class="abs" style="left:841.600px;top:66.300px" width="17.250" height="17.250" viewBox="0 0 24 24"><path fill="#616161" d="M20 8h-2.810c-.450-.780-1.070-1.450-1.820-1.960L17 4.410 15.590 3l-2.170 2.170C12.960 5.060 12.490 5 12 5c-.490 0-.960.060-1.410.170L8.410 3 7 4.410l1.620 1.630C7.880 6.550 7.260 7.220 6.810 8H4v2h2.090c-.050.330-.090.660-.090 1v1H4v2h2v1c0 .340.040.670.090 1H4v2h2.810c1.040 1.790 2.970 3 5.190 3s4.150-1.210 5.190-3H20v-2h-2.090c.050-.330.090-.660.090-1v-1h2v-2h-2v-1c0-.340-.040-.670-.090-1H20V8zm-6 8h-4v-2h4v2zm0-4h-4v-2h4v2z"/></svg>
<div class="t" style="left:874.7px;top:67.5px;font-size:13px;color:#222;transform-origin:0 50%;transform:scaleX(0.997)">Python 3 (ipykernel)</div>
<div class="abs" style="left:1001.5px;top:67.5px;width:13.500px;height:13.500px;border-radius:7px;border:1.300px solid #555"></div>
<!-- nb scrollbar -->
<div class="abs" style="left:1005px;top:88px;width:17px;height:479px;background:#f1f1f1"></div>
<div class="abs" style="left:1007px;top:114px;width:13px;height:125px;background:#c1c1c1"></div>
<svg class="abs" style="left:1009.5px;top:96px" width="8" height="5" viewBox="0 0 8 5"><path d="M0 5L4 0l4 5z" fill="#505050"/></svg>
<svg class="abs" style="left:1009.5px;top:555px" width="8" height="5" viewBox="0 0 8 5"><path d="M0 0l4 5 4-5z" fill="#505050"/></svg>

<!-- right sidebar -->
<div class="abs" style="left:1028px;top:29px;width:34px;height:544px;background:#eeeeee"></div>

<svg class="abs" style="left:1040.300px;top:50.400px" width="15" height="15" viewBox="0 0 24 24"><path fill="#616161" d="M19.140 12.940c.040-.300.060-.610.060-.940s-.020-.640-.070-.940l2.030-1.580a.490.490 0 0 0 .120-.610l-1.920-3.320a.490.490 0 0 0-.590-.220l-2.390.960c-.500-.380-1.030-.700-1.620-.940l-.360-2.540a.480.480 0 0 0-.480-.410h-3.840a.480.480 0 0 0-.470.410l-.360 2.540c-.590.240-1.130.570-1.620.940l-2.390-.960a.480.480 0 0 0-.590.220L2.740 8.870a.480.480 0 0 0 .120.610l2.030 1.580c-.050.300-.090.630-.090.940s.020.640.070.940l-2.030 1.580a.490.490 0 0 0-.120.610l1.920 3.320c.120.220.370.290.590.220l2.390-.960c.500.380 1.030.700 1.620.940l.360 2.540c.050.240.240.410.480.410h3.840c.240 0 .440-.170.470-.410l.360-2.540c.590-.240 1.130-.560 1.620-.940l2.390.960c.220.080.470 0 .590-.220l1.920-3.320a.480.480 0 0 0-.120-.610l-2.010-1.580zM12 15.600A3.600 3.600 0 1 1 12 8.400a3.600 3.600 0 0 1 0 7.200z"/></svg>
<svg class="abs" style="left:1035.500px;top:45.600px" width="10.500" height="10.500" viewBox="0 0 24 24"><path fill="#616161" d="M19.140 12.940c.040-.300.060-.610.060-.940s-.020-.640-.070-.940l2.030-1.580a.490.490 0 0 0 .120-.610l-1.920-3.320a.490.490 0 0 0-.590-.220l-2.390.960c-.500-.380-1.030-.700-1.620-.940l-.360-2.540a.480.480 0 0 0-.480-.410h-3.840a.480.480 0 0 0-.470.410l-.360 2.540c-.590.240-1.130.570-1.620.940l-2.390-.960a.480.480 0 0 0-.590.220L2.740 8.870a.480.480 0 0 0 .120.610l2.030 1.580c-.050.300-.090.630-.090.940s.020.640.070.940l-2.030 1.580a.490.490 0 0 0-.120.610l1.920 3.320c.120.220.370.290.590.220l2.390-.960c.500.380 1.030.700 1.620.940l.360 2.540c.050.240.240.410.480.410h3.840c.240 0 .440-.170.470-.410l.360-2.540c.590-.240 1.130-.560 1.620-.940l2.390.960c.220.080.470 0 .590-.220l1.920-3.320a.480.480 0 0 0-.120-.610l-2.010-1.580zM12 15.600A3.600 3.600 0 1 1 12 8.400a3.600 3.600 0 0 1 0 7.200z"/></svg>
<svg class="abs" style="left:1035px;top:97.700px" width="20.500" height="20.500" viewBox="0 0 24 24"><path fill="#616161" d="M20 8h-2.810c-.450-.780-1.070-1.450-1.820-1.960L17 4.410 15.590 3l-2.170 2.170C12.960 5.060 12.490 5 12 5c-.490 0-.960.060-1.410.170L8.410 3 7 4.410l1.620 1.630C7.880 6.550 7.260 7.220 6.810 8H4v2h2.090c-.050.330-.090.660-.090 1v1H4v2h2v1c0 .340.040.670.090 1H4v2h2.810c1.040 1.790 2.970 3 5.190 3s4.150-1.210 5.190-3H20v-2h-2.090c.050-.330.090-.660.090-1v-1h2v-2h-2v-1c0-.340-.040-.670-.090-1H20V8zm-6 8h-4v-2h4v2zm0-4h-4v-2h4v2z"/></svg>

<!-- status bar -->
<div class="abs" style="left:0;top:573px;width:1062px;height:24px;background:#eeeeee"></div>

<div class="t" style="left:28.8px;top:577.8px;font-size:13px;color:#222;transform-origin:0 50%;transform:scaleX(0.966)">Simple</div>
<div class="abs" style="left:73px;top:578px;width:34px;height:14px;border-radius:7px;background:#bdbdbd"></div>
<div class="abs" style="left:75px;top:580px;width:10px;height:10px;border-radius:5px;background:#fff"></div>
<div class="t" style="left:134px;top:579px;font-size:12.500px;color:#333">0</div>
<div class="abs" style="left:153px;top:577.5px;width:15px;height:15px;background:#424242;border-radius:1px"></div>
<div class="t" style="left:155px;top:581px;font-size:8.500px;color:#fff;font-weight:bold">$_</div>
<div class="t" style="left:177px;top:579px;font-size:12.500px;color:#333">1</div>
<svg class="abs" style="left:195px;top:578px" width="14" height="14" viewBox="0 0 14 14"><g stroke="#555" fill="none"><rect x="2.600" y="2.600" width="8.800" height="8.800" rx="1" stroke-width="1.300"/><rect x="5.300" y="5.300" width="3.400" height="3.400" stroke-width="1.200"/><path d="M5 0v2.500M9 0v2.500M5 11.500V14M9 11.500V14M0 5h2.500M0 9h2.500M11.500 5H14M11.500 9H14" stroke-width="1.200"/></g></svg>
<div class="t" style="left:228.6px;top:577.8px;font-size:13px;color:#222;transform-origin:0 50%;transform:scaleX(0.985)">Python 3 (ipykernel) | Idle</div>
<div class="t" style="left:759.5px;top:577.8px;font-size:13px;color:#222;transform-origin:0 50%;transform:scaleX(0.988)">Mode: Command</div>
<svg class="abs" style="left:877px;top:577px" width="14" height="15" viewBox="0 0 14 15"><path d="M7 .8l5.800 2v4.700c0 3.300-2.500 5.700-5.800 6.700C3.700 13.200 1.200 10.800 1.200 7.500V2.800z" stroke="#444" stroke-width="1.300" fill="none"/><path d="M4.700 4.800l4.600 4.600M9.300 4.800L4.700 9.400" stroke="#444" stroke-width="1.300"/></svg>
<div class="t" style="left:912.0px;top:577.8px;font-size:13px;color:#222;transform-origin:0 50%;transform:scaleX(0.927)">Ln 1, Col 1</div>
<div class="t" style="left:987.9px;top:577.8px;font-size:13px;color:#222;transform-origin:0 50%;transform:scaleX(0.986)">test.ipynb</div>


</div>
</div>

<div class="abs" style="left:523.500px;top:447.500px;width:55px;height:55px;border-radius:28px;background:rgba(238,228,0,.46)"></div>
<svg class="abs" style="left:546.700px;top:467px" width="9" height="17" viewBox="0 0 9 17"><path d="M1 1c2 0 3.500.5 3.500 2v11c0 1.500-1.500 2-3.500 2M8 1C6 1 4.500 1.500 4.500 3v11c0 1.500 1.500 2 3.500 2M2.500 8.500h4" stroke="#fff" stroke-width="1.800" opacity=".5" fill="none"/><path d="M1 1c2 0 3.500.5 3.500 2v11c0 1.500-1.500 2-3.500 2M8 1C6 1 4.500 1.500 4.500 3v11c0 1.500 1.500 2 3.500 2M2.500 8.500h4" stroke="#111" stroke-width="1.300" fill="none"/></svg>

</div></body></html>
